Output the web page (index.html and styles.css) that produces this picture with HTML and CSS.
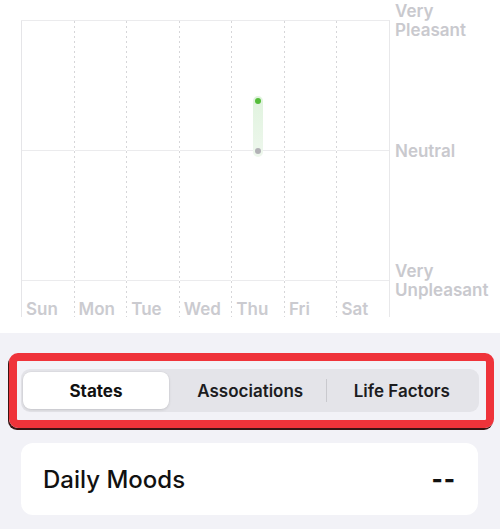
FILE: index.html
```html
<!DOCTYPE html>
<html>
<head>
<meta charset="utf-8">
<link rel="stylesheet" href="styles.css">
</head>
<body>
<section class="chart-section">
  <div class="chart">
    <div class="plot">
      <div class="col first"><div class="upper"></div><div class="lower"></div><div class="day">Sun</div></div>
      <div class="col"><div class="upper"></div><div class="lower"></div><div class="day">Mon</div></div>
      <div class="col"><div class="upper"></div><div class="lower"></div><div class="day">Tue</div></div>
      <div class="col"><div class="upper"></div><div class="lower"></div><div class="day">Wed</div></div>
      <div class="col">
        <div class="upper">
          <div class="range"></div>
          <span class="dot dot-green"></span>
          <span class="dot dot-gray"></span>
        </div>
        <div class="lower"></div><div class="day">Thu</div>
      </div>
      <div class="col"><div class="upper"></div><div class="lower"></div><div class="day">Fri</div></div>
      <div class="col"><div class="upper"></div><div class="lower"></div><div class="day">Sat</div></div>
    </div>
    <div class="axis">
      <div class="axis-label">Very<br>Pleasant</div>
      <div class="axis-label">Neutral</div>
      <div class="axis-label">Very<br>Unpleasant</div>
    </div>
  </div>
</section>
<section class="lower-section">
  <div class="highlight">
    <div class="segmented">
      <div class="seg selected">States</div>
      <div class="seg">Associations</div>
      <div class="sep"></div>
      <div class="seg">Life Factors</div>
    </div>
  </div>
  <div class="card">
    <span class="card-title">Daily Moods</span>
    <span class="card-value">--</span>
  </div>
</section>
</body>
</html>
```
FILE: styles.css
```css
* { box-sizing: border-box; }
html, body { margin: 0; padding: 0; }
body {
  width: 500px;
  height: 529px;
  overflow: hidden;
  background: #f2f2f7;
  font-family: "Inter", "Liberation Sans", sans-serif;
}
.chart-section {
  background: #ffffff;
  height: 333px;
}
.chart {
  display: flex;
  align-items: flex-start;
  padding-left: 21px;
}
.plot {
  margin-top: 20px;
  width: 369px;
  display: flex;
  border-top: 1px solid #ebebed;
  border-right: 1px solid #e8e8ea;
}
.col {
  flex: 1;
  display: flex;
  flex-direction: column;
  border-left: 1px solid transparent;
  background: repeating-linear-gradient(#d6d6d9 0 2px, transparent 2px 5px) left top / 1px 100% no-repeat;
  background-origin: border-box;
}
.col.first {
  border-left: 1px solid #e5e5e8;
  background: none;
}
.upper {
  height: 129px;
  position: relative;
}
.lower {
  height: 130px;
  border-top: 1px solid #ebebed;
}
.day {
  height: 37px;
  border-top: 1px solid #ebebed;
  padding: 18px 0 0 4px;
  font-size: 17px;
  line-height: 20px;
  font-weight: 600;
  color: #cbcbd0;
}
.range {
  position: absolute;
  left: 21px;
  top: 75px;
  width: 10px;
  height: 61px;
  border-radius: 5px;
  background: linear-gradient(#e0f3de, #eef7ed);
}
.dot {
  position: absolute;
  width: 6px;
  height: 6px;
  border-radius: 50%;
  left: 23px;
}
.dot-green { top: 77px; background: #55bd3a; }
.dot-gray { top: 127px; background: #b2b2b6; }
.axis {
  margin-top: 1px;
  margin-left: 5px;
  height: 300px;
  display: flex;
  flex-direction: column;
  justify-content: space-between;
}
.axis-label {
  height: 40px;
  display: flex;
  align-items: center;
  font-size: 17px;
  line-height: 19px;
  font-weight: 600;
  color: #c9c9ce;
}
.lower-section {
  padding-top: 20px;
}
.highlight {
  margin: 0 6px 0 9px;
  border: 8px solid #ef333a;
  border-radius: 9px;
  padding: 8px 7px 8px 4px;
  box-shadow: -1px 2px 0 #3a1414;
}
.segmented {
  display: flex;
  align-items: center;
  height: 43px;
  padding: 3px 2px;
  background: #e4e4e9;
  border-radius: 9px;
}
.seg {
  flex: 1;
  height: 37px;
  display: flex;
  align-items: center;
  justify-content: center;
  font-size: 17px;
  font-weight: 600;
  color: #1c1c1e;
}
.seg.selected {
  flex: 0 0 146px;
  margin-right: 6px;
  background: #ffffff;
  border-radius: 8px;
  font-weight: 700;
  color: #111111;
  box-shadow: 0 1px 3px rgba(0,0,0,0.12), 0 0 0 0.5px rgba(0,0,0,0.04);
}
.sep {
  width: 1px;
  height: 23px;
  background: #c9c9ce;
}
.card {
  margin: 15px 22px 0 21px;
  height: 72px;
  background: #ffffff;
  border-radius: 12px;
  display: flex;
  align-items: center;
  justify-content: space-between;
  padding: 0 22px;
}
.card-title {
  font-size: 24px;
  font-weight: 500;
  color: #111111;
}
.card-value {
  font-size: 24px;
  font-weight: 800;
  color: #111111;
  letter-spacing: 1px;
}
```
